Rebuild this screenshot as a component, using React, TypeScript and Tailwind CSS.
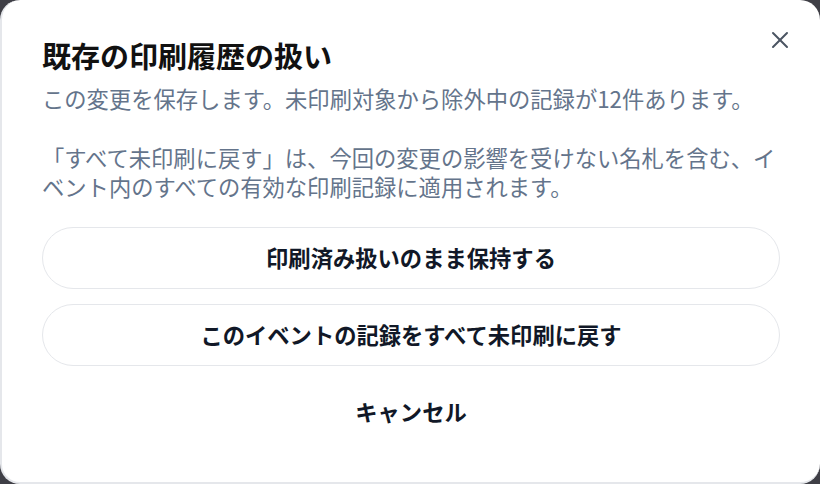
import React from "react";

export default function App() {
  const font = { fontFamily: '"Noto Sans CJK JP", "Noto Sans", sans-serif' };
  return (
    <div className="w-[820px] h-[484px] bg-[#3f3f46]" style={font}>
      <div className="relative w-full h-full bg-white rounded-[20px] border-l-2 border-b-2 border-[#e5e7eb] px-[40px] pt-[37px] flex flex-col">
        <button className="absolute top-[26px] right-[26px] w-[28px] h-[28px] flex items-center justify-center text-[#4b5563]">
          <svg width="28" height="28" viewBox="0 0 24 24" fill="none" stroke="currentColor" strokeWidth="1.7" strokeLinecap="round">
            <path d="M18 6 6 18" />
            <path d="m6 6 12 12" />
          </svg>
        </button>
        <h2 className="text-[29px] leading-[37px] font-bold text-[#111111]">既存の印刷履歴の扱い</h2>
        <p className="mt-[10px] text-[22.3px] leading-[29px] text-[#64748b] whitespace-nowrap">
          この変更を保存します。未印刷対象から除外中の記録が12件あります。
        </p>
        <p className="mt-[30px] text-[22.3px] leading-[29px] text-[#64748b] whitespace-nowrap">
          「すべて未印刷に戻す」は、今回の変更の影響を受けない名札を含む、イ
          <br />
          ベント内のすべての有効な印刷記録に適用されます。
        </p>
        <div className="mt-[26px] flex flex-col gap-[15px]">
          <button className="h-[62px] w-full rounded-full border-[1.5px] border-[#e5e7eb] bg-white text-[22.3px] font-semibold text-[#111827]">
            印刷済み扱いのまま保持する
          </button>
          <button className="h-[62px] w-full rounded-full border-[1.5px] border-[#e5e7eb] bg-white text-[22.3px] font-semibold text-[#111827]">
            このイベントの記録をすべて未印刷に戻す
          </button>
          <button className="h-[62px] w-full rounded-full bg-white text-[22.3px] font-semibold text-[#111827]">
            キャンセル
          </button>
        </div>
      </div>
    </div>
  );
}
